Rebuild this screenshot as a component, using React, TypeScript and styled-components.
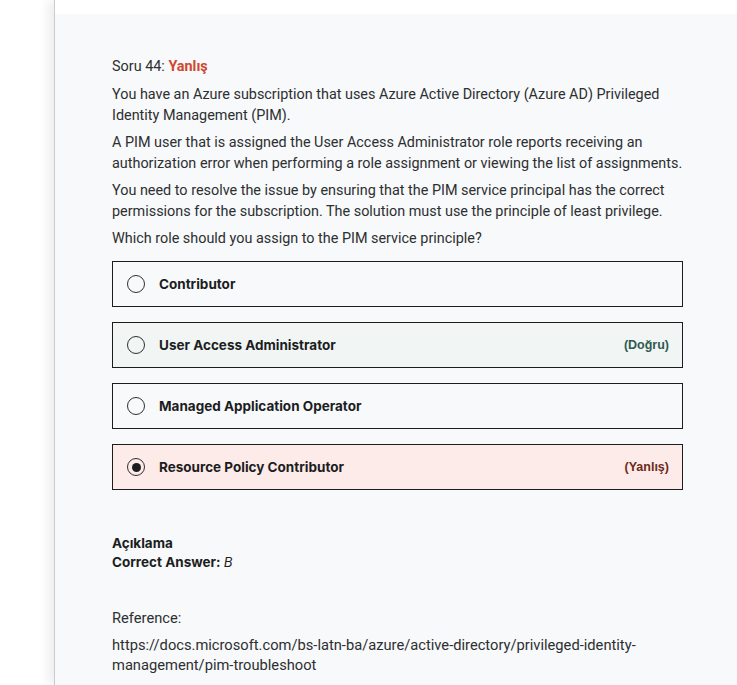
import React from "react";
import styled, { createGlobalStyle } from "styled-components";

const Global = createGlobalStyle`
  html, body { margin: 0; padding: 0; background: #ffffff; }
  body { font-family: Roboto, "Liberation Sans", sans-serif; color: #2d2f31; }
  * { box-sizing: border-box; }
`;

const Page = styled.div`
  display: flex;
  width: 737px;
  height: 685px;
  overflow: hidden;
`;

const Side = styled.div`
  width: 54px;
  flex: none;
  background: #ffffff;
`;

const Main = styled.div`
  flex: 1;
  border-left: 1px solid #c9cccf;
  box-shadow: -6px 0 10px rgba(0, 0, 0, 0.07);
  background: #ffffff;
  padding-top: 14px;
  position: relative;
`;

const Content = styled.div`
  background: #f7f9fa;
  height: 100%;
  padding: 43px 54px 0 57px;
`;

const Title = styled.div`
  font-size: 14.4px;
  line-height: 20px;
  color: #2d2f31;
  margin-bottom: 7px;
`;

const Wrong = styled.span`
  color: #d0482f;
  font-weight: 700;
`;

const Para = styled.p`
  margin: 0 0 6px;
  font-size: 14.4px;
  line-height: 21px;
  color: #2d2f31;
`;

const Options = styled.div`
  display: flex;
  flex-direction: column;
  gap: 15px;
  margin-top: 12px;
  width: 571px;
`;

const Option = styled.div<{ $state?: "correct" | "wrong" }>`
  height: 46px;
  display: flex;
  align-items: center;
  padding: 0 13px 0 14px;
  border: 1px solid #1c1d1f;
  background: ${(p) =>
    p.$state === "correct" ? "#f1f5f3" : p.$state === "wrong" ? "#fcebe8" : "#f7f9fa"};
`;

const Radio = styled.span<{ $checked?: boolean }>`
  width: 18px;
  height: 18px;
  border-radius: 50%;
  border: 1.5px solid #2d2f31;
  flex: none;
  display: flex;
  align-items: center;
  justify-content: center;
  margin-right: 14px;
  &::after {
    content: "";
    display: ${(p) => (p.$checked ? "block" : "none")};
    width: 9px;
    height: 9px;
    border-radius: 50%;
    background: #1c1d1f;
  }
`;

const Label = styled.span`
  flex: 1;
  font-family: Inter, "Liberation Sans", sans-serif;
  font-weight: 700;
  font-size: 13.5px;
  color: #1c1d1f;
`;

const Verdict = styled.span<{ $state: "correct" | "wrong" }>`
  font-family: "Liberation Sans", Arial, sans-serif;
  font-weight: 700;
  font-size: 12.5px;
  color: ${(p) => (p.$state === "correct" ? "#2f5a52" : "#6b2a20")};
`;

const Explain = styled.div`
  margin-top: 44px;
  font-family: Inter, "Liberation Sans", sans-serif;
  font-size: 13.5px;
  line-height: 19px;
  color: #1c1d1f;
`;

const Strong = styled.div`
  font-weight: 700;
  em {
    font-weight: 400;
    font-style: italic;
  }
`;

const Ref = styled.div`
  margin-top: 36px;
`;

const RefPara = styled(Para)`
  font-size: 14.7px;
  line-height: 20px;
  margin-bottom: 7px;
`;

const options: { label: string; state?: "correct" | "wrong"; checked?: boolean }[] = [
  { label: "Contributor" },
  { label: "User Access Administrator", state: "correct" },
  { label: "Managed Application Operator" },
  { label: "Resource Policy Contributor", state: "wrong", checked: true },
];

export default function App() {
  return (
    <>
      <Global />
      <Page>
        <Side />
        <Main>
          <Content>
            <Title>
              Soru 44: <Wrong>Yanlış</Wrong>
            </Title>
            <Para>
              You have an Azure subscription that uses Azure Active Directory (Azure AD) Privileged
              Identity Management (PIM).
            </Para>
            <Para>
              A PIM user that is assigned the User Access Administrator role reports receiving an
              authorization error when performing a role assignment or viewing the list of assignments.
            </Para>
            <Para>
              You need to resolve the issue by ensuring that the PIM service principal has the correct
              permissions for the subscription. The solution must use the principle of least privilege.
            </Para>
            <Para>Which role should you assign to the PIM service principle?</Para>
            <Options>
              {options.map((o) => (
                <Option key={o.label} $state={o.state}>
                  <Radio $checked={o.checked} />
                  <Label>{o.label}</Label>
                  {o.state && (
                    <Verdict $state={o.state}>
                      {o.state === "correct" ? "(Doğru)" : "(Yanlış)"}
                    </Verdict>
                  )}
                </Option>
              ))}
            </Options>
            <Explain>
              <Strong>Açıklama</Strong>
              <Strong>
                Correct Answer: <em>B</em>
              </Strong>
            </Explain>
            <Ref>
              <RefPara>Reference:</RefPara>
              <RefPara>
                https://docs.microsoft.com/bs-latn-ba/azure/active-directory/privileged-identity-
                <br />
                management/pim-troubleshoot
              </RefPara>
            </Ref>
          </Content>
        </Main>
      </Page>
    </>
  );
}
